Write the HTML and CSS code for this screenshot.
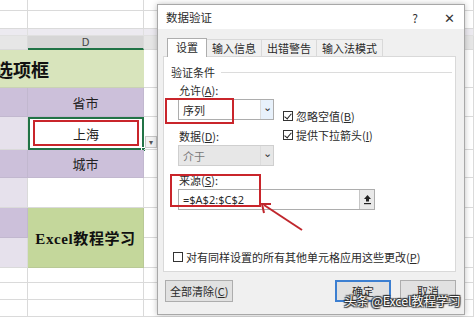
FILE: index.html
```html
<!DOCTYPE html>
<html lang="zh-CN">
<head>
  <meta charset="UTF-8" />
  <title>数据验证</title>
  <link rel="stylesheet" href="styles.css">
</head>
<body>
  <div class="sheet">
    <div class="row h11"><div class="c colc"></div><div class="c cold"></div><div class="c rest"></div></div>
    <div class="row h18"><div class="c colc"></div><div class="c cold"></div><div class="c rest"></div></div>
    <div class="row h7 band"><div class="c colc"></div><div class="c cold"></div><div class="c rest"></div></div>
    <div class="row h14 head"><div class="c colc"></div><div class="c cold hd">D</div><div class="c rest"></div></div>
    <div class="row h38 green1"><div class="title-cell">选项框</div><div class="c rest"></div></div>
    <div class="row h29"><div class="c colc lilac"></div><div class="c cold lilac">省市</div><div class="c rest"></div></div>
    <div class="row h33"><div class="c colc pale"></div><div class="c cold sel"><span class="redbox in-cell"></span>上海<span class="handle"></span></div><div class="c rest"><span class="dd">▾</span></div></div>
    <div class="row h28"><div class="c colc lilac"></div><div class="c cold lilac">城市</div><div class="c rest"></div></div>
    <div class="row h30"><div class="c colc pale"></div><div class="c cold"></div><div class="c rest"></div></div>
    <div class="row h60">
      <div class="stack"><div class="c colc lilac h30"></div><div class="c colc pale h30"></div></div>
      <div class="c cold green2 big">Excel教程学习</div>
      <div class="stack rest"><div class="c rest h30"></div><div class="c rest h30"></div></div>
    </div>
    <div class="row h15"><div class="c colc"></div><div class="c cold"></div><div class="c rest"></div></div>
    <div class="row h17"><div class="c colc"></div><div class="c cold"></div><div class="c rest"></div></div>
    <div class="row h17"><div class="c colc"></div><div class="c cold"></div><div class="c rest"></div></div>
  </div>

  <div class="dialog">
    <div class="titlebar">
      <span class="dtitle">数据验证</span>
      <span class="tb-btn">?</span>
      <span class="tb-btn close">✕</span>
    </div>
    <div class="dbody">
      <div class="tabs">
        <span class="tab active">设置</span>
        <span class="tab">输入信息</span>
        <span class="tab">出错警告</span>
        <span class="tab">输入法模式</span>
      </div>
      <div class="panel">
        <div class="legend"><span>验证条件</span><i></i></div>
        <div class="grid2">
          <div class="left">
            <div class="lbl">允许(<u>A</u>):</div>
            <div class="select"><span>序列</span><b class="arrow">⌄</b></div>
            <div class="lbl">数据(<u>D</u>):</div>
            <div class="select off"><span>介于</span><b class="arrow">⌄</b></div>
          </div>
          <div class="checks">
            <label class="chk"><span class="box on"></span>忽略空值(<u>B</u>)</label>
            <label class="chk"><span class="box on"></span>提供下拉箭头(<u>I</u>)</label>
          </div>
        </div>
        <div class="lbl src">来源(<u>S</u>):</div>
        <div class="srcline">
          <span>=$A$2:$C$2</span>
          <b class="pick">
            <svg width="9" height="11" viewBox="0 0 9 11">
              <path d="M4.5 1 L8 5 H6 V7.5 H3 V5 H1 Z" fill="#222"/>
              <rect x="1" y="9" width="7" height="1.2" fill="#222"/>
            </svg>
          </b>
        </div>
        <label class="chk apply"><span class="box"></span>对有同样设置的所有其他单元格应用这些更改(<u>P</u>)</label>
      </div>
      <div class="buttons">
        <span class="btn">全部清除(<u>C</u>)</span>
        <span class="grow"></span>
        <span class="btn ok">确定</span>
        <span class="btn">取消</span>
      </div>
    </div>
    <span class="redbox r1"></span>
    <span class="redbox r2"></span>
    <svg class="arrowline" width="50" height="32" viewBox="0 0 50 32">
      <line x1="44" y1="29" x2="6" y2="4" stroke="#c0272d" stroke-width="2"/>
      <polyline points="6,12 4,3 13,3" fill="none" stroke="#c0272d" stroke-width="2"/>
    </svg>
  </div>
  <div class="mark">头条 @Excel教程学习</div>
</body>
</html>
```

FILE: styles.css
```css
* {
  margin: 0;
  padding: 0;
  box-sizing: border-box;
}

body {
  width: 474px;
  height: 317px;
  overflow: hidden;
  position: relative;
  background: #fff;
  font-family: "Noto Sans CJK SC", "Noto Sans", sans-serif;
  color: #222;
}

/* sheet */
.sheet {
  display: flex;
  flex-direction: column;
}

.row {
  display: flex;
}

.h7 { height: 7px; }
.h11 { height: 11px; }
.h14 { height: 14px; }
.h15 { height: 15px; }
.h17 { height: 17px; }
.h18 { height: 18px; }
.h28 { height: 28px; }
.h29 { height: 29px; }
.h30 { height: 30px; }
.h33 { height: 33px; }
.h38 { height: 38px; }
.h60 { height: 60px; }

.c {
  border-right: 1px solid #dadada;
  border-bottom: 1px solid #dadada;
  display: flex;
  align-items: center;
  justify-content: center;
  font-size: 13px;
  position: relative;
}

.colc { width: 28px; }
.cold { width: 116px; }
.rest { flex: 1; }

.stack {
  display: flex;
  flex-direction: column;
}

.band .c { background: #eceaf0; border-color: #e0e0e0; }
.head .c { background: #e6e6e6; }
.head .hd {
  background: #d6d6d6;
  border-bottom: 2px solid #217346;
  font-size: 10px;
  color: #444;
  font-family: "DejaVu Sans", sans-serif;
}

.green1 .title-cell {
  width: 144px;
  background: #d8e4bc;
  border-bottom: 1px solid #c9d2b4;
  font-size: 18px;
  font-weight: 700;
  white-space: nowrap;
  overflow: hidden;
  text-indent: -5px;
  line-height: 38px;
  color: #111;
}

.lilac { background: #ccc0da; border-color: #c2b8cf; }
.pale { background: #e6e1ec; }
.green2 { background: #c4d79b; border-color: #b9c996; }

.big {
  font-family: "Liberation Serif", "Noto Sans CJK SC", serif;
  font-weight: 700;
  font-size: 15px;
  letter-spacing: 0.6px;
  color: #111;
}

.sel {
  border: 2px solid #217346;
}

.handle {
  position: absolute;
  right: -4px;
  bottom: -4px;
  width: 5px;
  height: 5px;
  background: #217346;
  border: 1px solid #fff;
}

.dd {
  position: absolute;
  left: 1px;
  top: 19px;
  width: 12px;
  height: 12px;
  border: 1px solid #c8c8c8;
  background: #f2f2f2;
  font-size: 8px;
  line-height: 10px;
  text-align: center;
  color: #555;
}

.redbox {
  position: absolute;
  border: 2px solid #c9252b;
}

.in-cell {
  left: 3px;
  top: 1px;
  right: 3px;
  bottom: 2px;
}

/* dialog */
.dialog {
  position: absolute;
  left: 157px;
  top: 4px;
  width: 308px;
  height: 311px;
  background: #f0f0f0;
  border: 1px solid #a8a8a8;
  box-shadow: 0 0 6px rgba(0, 0, 0, 0.25);
  font-size: 11px;
  color: #2a2a2a;
}

.titlebar {
  height: 24px;
  background: #fff;
  display: flex;
  align-items: center;
  padding-left: 8px;
}

.dtitle {
  flex: 1;
  font-size: 11.5px;
}

.tb-btn {
  width: 34px;
  text-align: center;
  font-size: 12px;
  color: #333;
}

.close {
  font-size: 13px;
  margin-right: -2px;
}

.dbody {
  padding: 9px 8px 0 5px;
}

.tabs {
  display: flex;
  padding-left: 4px;
  height: 18px;
  align-items: flex-end;
}

.tab {
  height: 17px;
  padding: 0 5px;
  border: 1px solid #d9d9d9;
  border-bottom: none;
  margin-left: -1px;
  line-height: 16px;
  background: #f0f0f0;
  white-space: nowrap;
}

.tab.active {
  height: 19px;
  background: #fff;
  border-color: #adadad;
  padding: 0 8px;
  margin-left: 0;
  position: relative;
  z-index: 1;
  margin-bottom: -1px;
}

.panel {
  background: #fff;
  border: 1px solid #d9d9d9;
  height: 216px;
  padding: 8px 0 0 7px;
}

.legend {
  display: flex;
  align-items: center;
  height: 14px;
  padding-right: 3px;
}

.legend i {
  flex: 1;
  height: 1px;
  background: #dcdcdc;
  margin-left: 6px;
}

.grid2 {
  display: flex;
  margin-top: 3px;
}

.left {
  width: 103px;
  padding-left: 7px;
}

.lbl {
  height: 17px;
  line-height: 17px;
  padding-left: 1px;
}

.select {
  height: 21px;
  border: 1px solid #adadad;
  display: flex;
  align-items: center;
  padding-left: 4px;
  margin: 0 0 8px 0;
  background: #fff;
}

.select span { flex: 1; }

.arrow {
  width: 13px;
  height: 19px;
  border-left: 1px solid #dcdcdc;
  background: #e8f1fb;
  text-align: center;
  font-weight: 400;
  line-height: 12px;
  font-size: 11px;
  color: #333;
}

.select.off {
  background: #e7e7e7;
  border-color: #cfcfcf;
  color: #777;
}

.select.off .arrow { background: #e7e7e7; }

.checks {
  padding: 24px 0 0 9px;
}

.chk {
  display: flex;
  align-items: center;
  height: 19px;
  white-space: nowrap;
}

.box {
  width: 10px;
  height: 10px;
  border: 1px solid #333;
  background: #fff;
  margin-right: 3px;
  position: relative;
}

.box.on::after {
  content: "";
  position: absolute;
  left: 2px;
  top: 0;
  width: 3px;
  height: 6px;
  border: solid #222;
  border-width: 0 1.5px 1.5px 0;
  transform: rotate(40deg);
}

.src {
  margin: -2px 0 0 7px;
}

.srcline {
  margin: 0 0 0 7px;
  width: 197px;
  height: 21px;
  border: 1px solid #adadad;
  display: flex;
  align-items: center;
  padding-left: 4px;
}

.srcline span {
  flex: 1;
  font-family: "Noto Sans", sans-serif;
  font-size: 11px;
}

.pick {
  width: 15px;
  height: 19px;
  background: #e9e9e9;
  border-left: 1px solid #c6c6c6;
  display: flex;
  align-items: center;
  justify-content: center;
}

.apply {
  margin: 37px 0 0 2px;
}

.buttons {
  display: flex;
  gap: 9px;
  margin-top: 8px;
  padding-left: 2px;
}

.grow { flex: 1; }

.btn {
  height: 22px;
  min-width: 56px;
  padding: 0 4px;
  border: 1px solid #adadad;
  background: #e1e1e1;
  text-align: center;
  line-height: 20px;
  white-space: nowrap;
}

.btn.ok {
  border: 2px solid #3c7fd1;
  line-height: 18px;
}

.r1 {
  left: 7px;
  top: 93px;
  width: 69px;
  height: 26px;
}

.r2 {
  left: 12px;
  top: 169px;
  width: 91px;
  height: 33px;
}

.arrowline {
  position: absolute;
  left: 100px;
  top: 196px;
}

.mark {
  position: absolute;
  left: 344px;
  top: 291px;
  font-size: 12.5px;
  letter-spacing: -0.2px;
  color: #fff;
  white-space: nowrap;
  text-shadow: 0 0 1px #000, 1px 1px 1px #333, -1px -1px 1px #333, 1px -1px 1px #333, -1px 1px 1px #333;
}
```
